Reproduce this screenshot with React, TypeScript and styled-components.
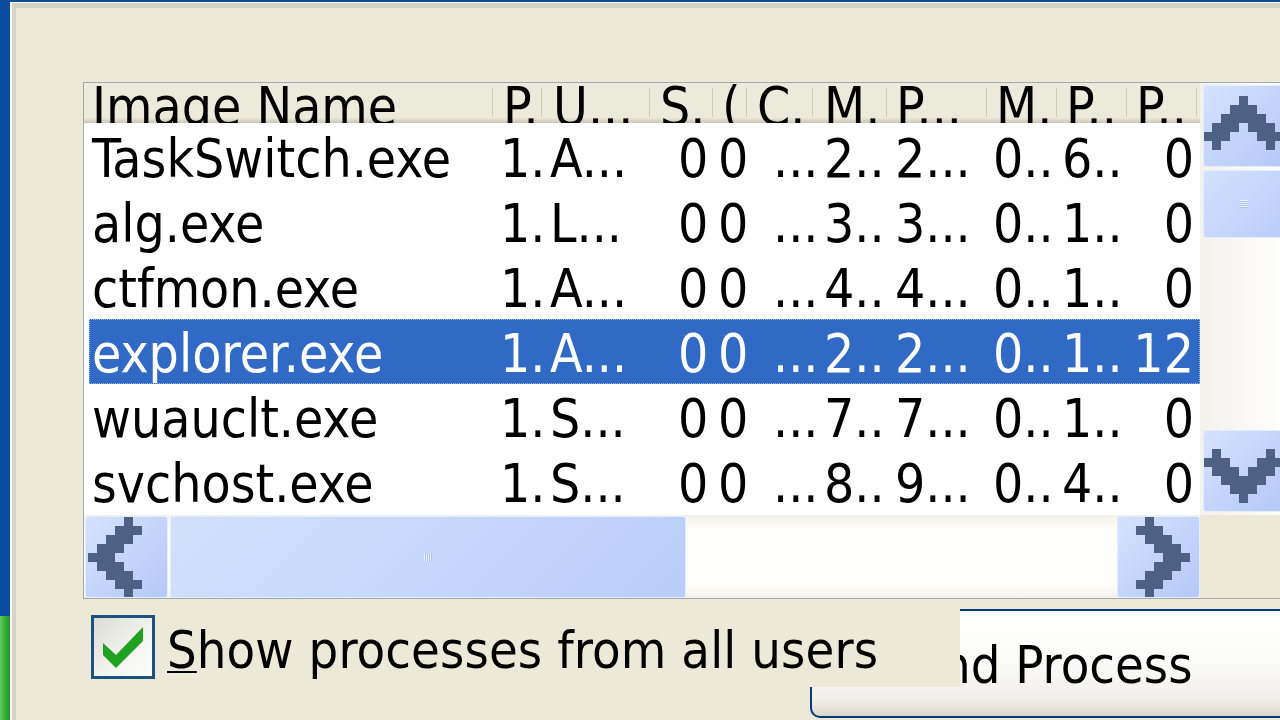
import React from "react";
import styled, { createGlobalStyle } from "styled-components";

const GlobalStyle = createGlobalStyle`
  html, body { margin: 0; padding: 0; width: 1280px; height: 720px; overflow: hidden; background: #ECE9D8; }
  #root { width: 1280px; height: 720px; }
  * { box-sizing: border-box; }
`;

const FONT = `"DejaVu Sans Condensed", "DejaVu Sans", sans-serif`;
const XP_BLUE = "#0C4DA0";

const Screen = styled.div`
  width: 1280px;
  height: 720px;
  display: flex;
  flex-direction: column;
  overflow: hidden;
  font-family: ${FONT};
  font-stretch: condensed;
  font-size: 52px;
  color: #000;
`;

const TopBar = styled.div`
  height: 2px;
  flex: none;
  background: ${XP_BLUE};
`;

const Body = styled.div`
  flex: 1;
  display: flex;
  min-height: 0;
`;

const LeftStrip = styled.div`
  width: 10px;
  flex: none;
  display: flex;
  flex-direction: column;
`;

const StripBlue = styled.div`
  flex: 1;
  background: ${XP_BLUE};
`;

const StripGreen = styled.div`
  height: 104px;
  flex: none;
  background: linear-gradient(to right, #62CF62, #34A934 55%, #24902A);
`;

const Frame = styled.div`
  flex: 1;
  min-width: 0;
  display: flex;
  border-left: 2px solid #FBFBF8;
  border-top: 1px solid #FBFBF8;
`;

const Panel = styled.div`
  flex: 1;
  min-width: 0;
  overflow: hidden;
  display: flex;
  flex-direction: column;
  background: #ECE9D8;
  border-left: 4px solid #D6D3C6;
  border-top: 5px solid #D6D3C6;
  padding: 74px 0 0 67px;
`;

/* ---------- List view ---------- */

const ListView = styled.div`
  flex: none;
  width: 1201px;
  display: grid;
  grid-template-columns: 1116px 84px;
  grid-template-rows: 432px 83px;
  border-top: 1px solid #A3A7AE;
  border-left: 1px solid #A3A7AE;
  border-bottom: 1px solid #A3A7AE;
  background: #fff;
  font-size: 53px;
`;

const ListBody = styled.div`
  display: flex;
  flex-direction: column;
  background: #fff;
  overflow: hidden;
`;

const HeaderRow = styled.div`
  height: 40px;
  flex: none;
  display: flex;
  overflow: hidden;
  background: linear-gradient(
    to bottom,
    #EBEADB 0%,
    #EBEADB 86%,
    #E2DECD 91%,
    #D6D2C2 95%,
    #CBC7B8 100%
  );
`;

const HeaderCell = styled.div<{ $w: number; $pad: number }>`
  position: relative;
  flex: none;
  width: ${(p) => p.$w}px;
  height: 40px;
  padding-left: ${(p) => p.$pad}px;
  line-height: 48px;
  white-space: nowrap;
  overflow: hidden;

  &::after {
    content: "";
    position: absolute;
    right: 0;
    top: 5px;
    bottom: 6px;
    width: 1px;
    background: #CFCCBC;
  }
`;

const Rows = styled.div`
  flex: 1;
  padding-top: 1px;
  display: flex;
  flex-direction: column;
  background: #fff;
`;

const Row = styled.div<{ $selected?: boolean }>`
  flex: none;
  display: flex;
  height: 65px;
  width: 1111px;
  margin-left: 5px;
  padding-top: 2px;
  line-height: 65px;
  white-space: nowrap;
  background: ${(p) => (p.$selected ? "#316AC5" : "transparent")};
  color: ${(p) => (p.$selected ? "#fff" : "#000")};
  outline: ${(p) => (p.$selected ? "1px dotted #9DB9E6" : "none")};
  outline-offset: -1px;
`;

const Cell = styled.div<{ $w: number; $pad: number; $right?: boolean }>`
  flex: none;
  width: ${(p) => p.$w}px;
  padding-left: ${(p) => (p.$right ? 0 : p.$pad)}px;
  padding-right: ${(p) => (p.$right ? p.$pad : 0)}px;
  text-align: ${(p) => (p.$right ? "right" : "left")};
  white-space: nowrap;
`;

/* ---------- Scroll bars ---------- */

const VScroll = styled.div`
  display: flex;
  flex-direction: column;
  padding: 2px 0 3px 3px;
  background: linear-gradient(to right, #F3F1EC, #FEFEFB);
`;

const HScroll = styled.div`
  display: flex;
  padding: 1px 0 0 1px;
  background: linear-gradient(
    to bottom,
    #F3F1EA 0%,
    #FEFEFB 18%,
    #FEFEFB 82%,
    #F3F1EA 100%
  );
`;

const Corner = styled.div`
  background: #ECE9D8;
`;

const ScrollBtn = styled.div<{
  $w: number;
  $h: number;
  $justify?: string;
  $align?: string;
  $pad?: string;
}>`
  flex: none;
  width: ${(p) => p.$w}px;
  height: ${(p) => p.$h}px;
  display: flex;
  justify-content: ${(p) => p.$justify || "center"};
  align-items: ${(p) => p.$align || "center"};
  padding: ${(p) => p.$pad || "0"};
  overflow: hidden;
  border: 1px solid #E4ECFD;
  border-radius: 3px;
  background: linear-gradient(135deg, #D6E2FD 0%, #C4D5FB 50%, #B5C9F7 100%);
`;

const Thumb = styled.div<{ $w: number; $h: number; $mt?: number; $ml?: number }>`
  flex: none;
  width: ${(p) => p.$w}px;
  height: ${(p) => p.$h}px;
  margin-top: ${(p) => p.$mt || 0}px;
  margin-left: ${(p) => p.$ml || 0}px;
  display: flex;
  align-items: center;
  justify-content: center;
  border: 1px solid #E4ECFD;
  border-radius: 3px;
  background: linear-gradient(135deg, #D3E0FD 0%, #C6D7FC 50%, #B9CDF9 100%);
`;

const Track = styled.div`
  flex: 1;
`;

const ArrowSvg = styled.svg`
  flex: none;
  display: block;
`;

const GripSvg = styled.svg`
  display: block;
  flex: none;
`;

const PATTERN = [
  "....X....",
  "...XXX...",
  "..XXXXX..",
  ".XXX.XXX.",
  "XXX...XXX",
  ".X.....X.",
];
const U = 9;

type Dir = "up" | "down" | "left" | "right";

function Arrow({ dir }: { dir: Dir }) {
  const vertical = dir === "up" || dir === "down";
  const w = vertical ? 9 * U : 6 * U;
  const h = vertical ? 6 * U : 9 * U;
  const rects: React.ReactElement[] = [];
  PATTERN.forEach((row, r) =>
    row.split("").forEach((ch, c) => {
      if (ch !== "X") return;
      let x = c;
      let y = r;
      if (dir === "down") {
        x = c;
        y = 5 - r;
      } else if (dir === "left") {
        x = r;
        y = c;
      } else if (dir === "right") {
        x = 5 - r;
        y = c;
      }
      rects.push(
        <rect key={`${r}-${c}`} x={x * U} y={y * U} width={U} height={U} />
      );
    })
  );
  return (
    <ArrowSvg
      width={w}
      height={h}
      viewBox={`0 0 ${w} ${h}`}
      fill="#4D6185"
      shapeRendering="crispEdges"
    >
      {rects}
    </ArrowSvg>
  );
}

function Grip({ vertical }: { vertical: boolean }) {
  const lines = [0, 2, 4, 6];
  if (vertical) {
    return (
      <GripSvg width={8} height={8} viewBox="0 0 8 8" shapeRendering="crispEdges">
        {lines.map((y) => (
          <rect key={y} x={0} y={y} width={8} height={1} fill="#EEF3FE" />
        ))}
        {lines.map((y) => (
          <rect key={`d${y}`} x={0} y={y + 1} width={8} height={1} fill="#A9C0F3" />
        ))}
      </GripSvg>
    );
  }
  return (
    <GripSvg width={8} height={8} viewBox="0 0 8 8" shapeRendering="crispEdges">
      {lines.map((x) => (
        <rect key={x} x={x} y={0} width={1} height={8} fill="#EEF3FE" />
      ))}
      {lines.map((x) => (
        <rect key={`d${x}`} x={x + 1} y={0} width={1} height={8} fill="#A9C0F3" />
      ))}
    </GripSvg>
  );
}

/* ---------- Bottom area ---------- */

const BottomArea = styled.div`
  flex: none;
  display: grid;
  grid-template-columns: 727px 150px 334px;
  grid-template-rows: 10px 78px 31px;
`;

const CheckControl = styled.label`
  grid-column: 1 / 3;
  grid-row: 1 / 3;
  z-index: 1;
  display: flex;
  align-items: flex-start;
  padding: 16px 0 0 8px;
  background: #ECE9D8;
`;

const CheckBox = styled.span`
  flex: none;
  width: 64px;
  height: 64px;
  display: flex;
  border: 3px solid #1C5180;
  background: linear-gradient(135deg, #DCDCD5 0%, #F2F2EE 55%, #FFFFFF 100%);
`;

const CheckSvg = styled.svg`
  display: block;
`;

const CheckLabel = styled.span`
  padding: 3px 0 0 12px;
  line-height: 64px;
  white-space: nowrap;
  letter-spacing: 0.1px;

  & u {
    text-decoration: underline;
    text-decoration-thickness: 2px;
    text-underline-offset: 3px;
  }
`;

const EndButton = styled.div`
  grid-column: 2 / 4;
  grid-row: 2 / 4;
  z-index: 0;
  display: flex;
  align-items: center;
  justify-content: center;
  border: 2px solid #003C74;
  border-radius: 10px;
  background: linear-gradient(
    to bottom,
    #FFFFFF 0%,
    #FAFAF8 50%,
    #F0EFEA 85%,
    #DCD7CB 100%
  );
  white-space: nowrap;
  padding-top: 2px;
`;

/* ---------- Data ---------- */

type Col = { w: number; hw?: number; hp: number; rp: number; right?: boolean; label: string };

const COLS: Col[] = [
  { w: 404, hw: 409, hp: 8, rp: 3, label: "Image Name" },
  { w: 49, hp: 10, rp: 7, label: "P." },
  { w: 108, hp: 11, rp: 8, label: "U..." },
  { w: 63, hp: 10, rp: 28, label: "S." },
  { w: 34, hp: 9, rp: 5, label: "(" },
  { w: 66, hp: 10, rp: 26, label: "C." },
  { w: 74, hp: 11, rp: 11, label: "M." },
  { w: 100, hp: 9, rp: 8, label: "P..." },
  { w: 70, hp: 9, rp: 6, label: "M." },
  { w: 70, hp: 9, rp: 5, label: "P.." },
  { w: 73, hw: 70, hp: 9, rp: 6, right: true, label: "P.." },
];

const ROWS: string[][] = [
  ["TaskSwitch.exe", "1.", "A...", "0", "0", "...", "2..", "2...", "0..", "6..", "0"],
  ["alg.exe", "1.", "L...", "0", "0", "...", "3..", "3...", "0..", "1..", "0"],
  ["ctfmon.exe", "1.", "A...", "0", "0", "...", "4..", "4...", "0..", "1..", "0"],
  ["explorer.exe", "1.", "A...", "0", "0", "...", "2..", "2...", "0..", "1..", "12"],
  ["wuauclt.exe", "1.", "S...", "0", "0", "...", "7..", "7...", "0..", "1..", "0"],
  ["svchost.exe", "1.", "S...", "0", "0", "...", "8..", "9...", "0..", "4..", "0"],
];

const SELECTED = 3;

export default function App() {
  return (
    <>
      <GlobalStyle />
      <Screen>
        <TopBar />
        <Body>
          <LeftStrip>
            <StripBlue />
            <StripGreen />
          </LeftStrip>
          <Frame>
            <Panel>
              <ListView>
                <ListBody>
                  <HeaderRow>
                    {COLS.map((c, i) => (
                      <HeaderCell key={i} $w={c.hw ?? c.w} $pad={c.hp}>
                        {c.label}
                      </HeaderCell>
                    ))}
                  </HeaderRow>
                  <Rows>
                    {ROWS.map((row, ri) => (
                      <Row key={ri} $selected={ri === SELECTED}>
                        {row.map((txt, ci) => (
                          <Cell
                            key={ci}
                            $w={COLS[ci].w}
                            $pad={COLS[ci].rp}
                            $right={COLS[ci].right}
                          >
                            {txt}
                          </Cell>
                        ))}
                      </Row>
                    ))}
                  </Rows>
                </ListBody>

                <VScroll>
                  <ScrollBtn $w={81} $h={82} $align="flex-start" $pad="10px 0 0 0">
                    <Arrow dir="up" />
                  </ScrollBtn>
                  <Thumb $w={81} $h={68} $mt={3}>
                    <Grip vertical />
                  </Thumb>
                  <Track />
                  <ScrollBtn $w={81} $h={82} $align="flex-end" $pad="0 0 8px 0">
                    <Arrow dir="down" />
                  </ScrollBtn>
                </VScroll>

                <HScroll>
                  <ScrollBtn $w={83} $h={82} $justify="flex-start" $pad="0 0 0 2px">
                    <Arrow dir="left" />
                  </ScrollBtn>
                  <Thumb $w={516} $h={82} $ml={2}>
                    <Grip vertical={false} />
                  </Thumb>
                  <Track />
                  <ScrollBtn $w={83} $h={82} $justify="flex-end" $pad="0 9px 0 0">
                    <Arrow dir="right" />
                  </ScrollBtn>
                </HScroll>

                <Corner />
              </ListView>

              <BottomArea>
                <CheckControl>
                  <CheckBox>
                    <CheckSvg width={58} height={58} viewBox="0 0 58 58">
                      <polygon
                        points="9,25 22,37 49,9 49,23 22,50 9,37"
                        fill="#21A121"
                      />
                    </CheckSvg>
                  </CheckBox>
                  <CheckLabel>
                    <u>S</u>how processes from all users
                  </CheckLabel>
                </CheckControl>
                <EndButton>End Process</EndButton>
              </BottomArea>
            </Panel>
          </Frame>
        </Body>
      </Screen>
    </>
  );
}
